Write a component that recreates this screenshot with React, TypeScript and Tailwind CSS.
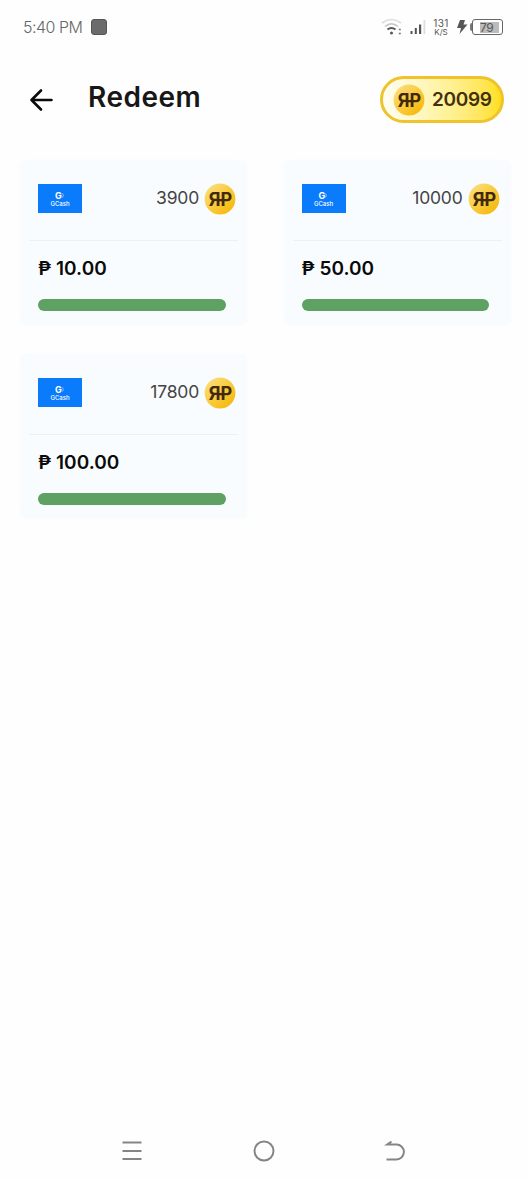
import React from 'react';

interface Reward {
  id: number;
  points: number;
  amount: string;
}

const rewards: Reward[] = [
  { id: 1, points: 3900, amount: '10.00' },
  { id: 2, points: 10000, amount: '50.00' },
  { id: 3, points: 17800, amount: '100.00' },
];

const Coin: React.FC<{ id: string }> = ({ id }) => (
  <svg width="32" height="32" viewBox="0 0 32 32" className="shrink-0">
    <defs>
      <linearGradient id={id} x1="0" y1="0" x2="1" y2="1">
        <stop offset="0" stopColor="#fbe28c" />
        <stop offset="0.5" stopColor="#f9cb3c" />
        <stop offset="1" stopColor="#f5b400" />
      </linearGradient>
    </defs>
    <circle cx="16" cy="16" r="15.4" fill={`url(#${id})`} />
    {/* Back-to-back R and P, tied together by the middle bar */}
    <g fill="#43290c" fontFamily="Inter, sans-serif" fontWeight="700" fontSize="18.5">
      <text transform="translate(16.4 22.8) scale(-0.97 1)">R</text>
      <text transform="translate(16.6 22.8) scale(0.97 1)">P</text>
      <rect x="13" y="16" width="7" height="2.3" />
    </g>
  </svg>
);

const GCashLogo: React.FC = () => (
  <div className="mb-0.5 flex h-[29px] w-11 flex-col items-center justify-center bg-[#0a7bfa] text-white">
    <div className="mt-px flex items-center text-[9px] leading-[9px] font-bold">
      G
      <svg width="3" height="7" viewBox="0 0 3 7" fill="none">
        <path d="M0.5 1.5Q2.3 3.5 0.5 5.5" stroke="#8cc4ff" strokeWidth="1" />
      </svg>
    </div>
    <span className="text-[6px] leading-[7px] font-medium">GCash</span>
  </div>
);

const StatusBar: React.FC = () => (
  <div className="flex h-[54px] items-center justify-between pr-6 pl-[23px] text-[#666]">
    <div className="flex items-center gap-[9px]">
      <span className="w-[59px] text-base font-light tracking-[-0.5px] whitespace-nowrap">5:40 PM</span>
      <span className="size-4 rounded-[3px] border border-[#555] bg-[#6b6b6b]" />
    </div>
    <div className="flex items-center">
      <svg width="22" height="20" viewBox="0 0 22 20" fill="none" strokeWidth="1.6" className="-ml-0.5">
        <path d="M1 6Q10.5 -1 20 6" stroke="#dcdcdc" />
        <path d="M4 9.5Q10.5 4 17 9.5" stroke="#c4c4c4" />
        <path d="M6.5 12.5Q10.5 9.5 14.5 12.5" stroke="#555" strokeWidth="2" />
        <circle cx="10.5" cy="16" r="1.5" fill="#555" />
        <path d="M17.8 12.5h2M17.8 16.5h2" stroke="#777" />
      </svg>
      <svg width="17" height="16" viewBox="0 0 17 16" className="ml-[7px]">
        <path d="M0.5 12h2v3h-2zM4.8 9h2v6h-2zM9 5.5h2.2V15H9z" fill="#555" />
        <path d="M13.5 1h1.8v14h-1.8z" fill="#ddd" />
      </svg>
      <div className="ml-[5px] flex w-[18px] flex-col items-center text-[#555]">
        <span className="text-[10px] leading-[10px] tracking-[0.4px]">131</span>
        <span className="text-[8px] leading-[8px]">K/S</span>
      </div>
      <svg width="12" height="16" viewBox="0 0 12 16" className="ml-[6px]">
        <path d="M4 1h5L7.5 5.5H11.5L3.5 15L5 9H1z" fill="#555" />
      </svg>
      <div className="ml-[2px] flex items-center">
        <span className="h-2 w-[2px] rounded-l bg-[#777]" />
        <div className="flex h-4 w-[31px] items-center justify-end rounded-[3px] border border-[#666] pr-[3px]">
          <span className="h-[11px] w-[19px] bg-[#bbb] text-[12px] leading-[11px] tracking-[-0.5px] text-[#555]">79</span>
        </div>
      </div>
    </div>
  </div>
);

const RewardCard: React.FC<{ reward: Reward }> = ({ reward }) => (
  <div className="h-[165px] rounded-md bg-[#f9fcff] pt-[23px] shadow-[0_0_4px_#f9fcff]">
    <div className="flex h-8 items-center justify-between pr-[11px] pl-[18px]">
      <GCashLogo />
      <div className="flex items-center gap-[5px]">
        <span className="mb-0.5 text-[17.5px] tracking-[-0.2px] text-[#444]">{reward.points}</span>
        <Coin id={`coin-${reward.id}`} />
      </div>
    </div>
    <div className="mx-[9px] mt-[25px] border-t border-[#edf0f3]" />
    <div className="mt-[14px] ml-[18px] text-[19px] leading-[27px] font-semibold text-[#0a0a0a]">
      ₱ {reward.amount}
    </div>
    <div className="mt-[17px] ml-[18px] h-3 w-[187.5px] rounded-full bg-[#5fa163]" />
  </div>
);

export default function App() {
  return (
    <div className="flex h-[1180px] w-[527px] flex-col overflow-hidden bg-[#fefefe] font-['Inter',sans-serif]">
      <StatusBar />

      <header className="flex h-[90px] items-center pr-[23px] pl-[29px]">
        <svg width="24" height="24" viewBox="0 0 24 24" fill="none" stroke="#0a0a0a" strokeWidth="2.6" strokeLinecap="round" strokeLinejoin="round" className="mt-px">
          <path d="M22.5 12H2.5M12 2.5L2.5 12L12 21.5" />
        </svg>
        <h1 className="mb-[5px] ml-[35px] text-[28px] leading-9 font-semibold tracking-[0.5px] text-[#171717]">Redeem</h1>
        <div className="ml-auto flex h-[47px] w-[124px] items-center rounded-full border-3 border-[#efc32b] bg-linear-to-r from-[#fffdf4] via-[#fff3a0] to-[#ffe012] pt-px pl-[10px]">
          <Coin id="coin-balance" />
          <span className="mt-0.5 ml-[7px] text-[19px] font-semibold tracking-[-0.3px] text-[#42300f]">20099</span>
        </div>
      </header>

      <main className="mt-4 grid grid-cols-[227px_227px] gap-x-[36.5px] gap-y-[29px] pl-5">
        {rewards.map((reward) => (
          <RewardCard key={reward.id} reward={reward} />
        ))}
      </main>

      {/* System navigation */}
      <nav className="mt-auto flex h-[58px] items-center justify-between px-[121px]">
        <svg width="22" height="22" viewBox="0 0 22 22" fill="none" stroke="#858585" strokeWidth="2">
          <path d="M1.5 2.5h19M1.5 11h19M1.5 19h19" />
        </svg>
        <svg width="22" height="22" viewBox="0 0 22 22" fill="none" stroke="#858585" strokeWidth="2">
          <circle cx="11" cy="11" r="9.5" />
        </svg>
        <svg width="22" height="22" viewBox="0 0 22 22" fill="none" stroke="#858585" strokeWidth="2">
          <path d="M7.5 1.5L3 4.6H12.5A7.4 7.4 0 0 1 12.5 19.4H2.5" />
        </svg>
      </nav>
    </div>
  );
}
